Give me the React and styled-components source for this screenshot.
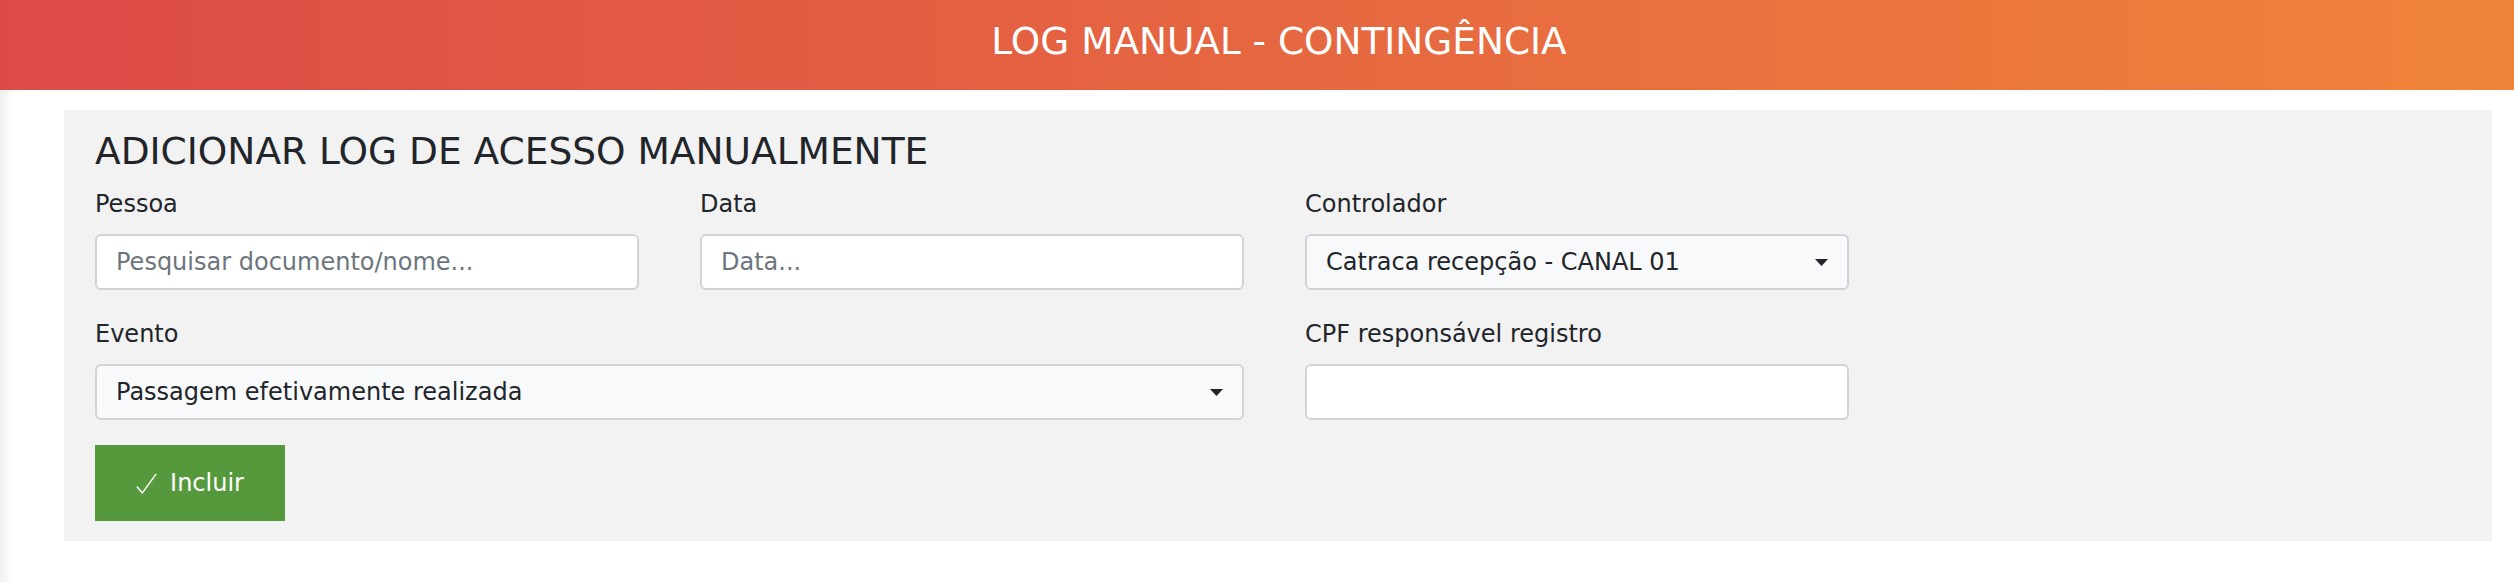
import React from "react";
import styled, { createGlobalStyle } from "styled-components";

const GlobalStyle = createGlobalStyle`
  body {
    margin: 0;
    background: #ffffff;
    font-family: "DejaVu Sans", "Open Sans", sans-serif;
    color: #212529;
  }
  * {
    box-sizing: border-box;
  }
`;

function App() {
  return (
    <>
      <GlobalStyle />
      <Header>
        <Title>LOG MANUAL - CONTINGÊNCIA</Title>
      </Header>
      <Main>
        <Panel>
          <Heading>ADICIONAR LOG DE ACESSO MANUALMENTE</Heading>
          <Form>
            <Field>
              <Label htmlFor="pessoa">Pessoa</Label>
              <Input id="pessoa" placeholder="Pesquisar documento/nome..." />
            </Field>
            <Field>
              <Label htmlFor="data">Data</Label>
              <Input id="data" placeholder="Data..." />
            </Field>
            <Field>
              <Label htmlFor="controlador">Controlador</Label>
              <Select id="controlador">
                <span>Catraca recepção - CANAL 01</span>
                <Caret />
              </Select>
            </Field>
            <Field $span={2}>
              <Label htmlFor="evento">Evento</Label>
              <Select id="evento">
                <span>Passagem efetivamente realizada</span>
                <Caret />
              </Select>
            </Field>
            <Field>
              <Label htmlFor="cpf">CPF responsável registro</Label>
              <Input id="cpf" />
            </Field>
          </Form>
          <Button type="button">
            <CheckIcon />
            Incluir
          </Button>
        </Panel>
      </Main>
    </>
  );
}

const Caret = () => (
  <svg width="13" height="7" viewBox="0 0 13 7">
    <path d="M0 0 H13 L6.5 7 Z" fill="#212529" />
  </svg>
);

const CheckIcon = () => (
  <svg width="21" height="21" viewBox="0 0 21 21">
    <polyline
      points="0.8,13.5 6.3,20 20.2,0.8"
      fill="none"
      stroke="#ffffff"
      strokeWidth="1.4"
    />
  </svg>
);

const Header = styled.header`
  height: 90px;
  display: flex;
  align-items: center;
  justify-content: center;
  padding: 0 0 8px 44px;
  background: linear-gradient(90deg, #dc4a47 0%, #ef833a 100%);
`;

const Title = styled.h1`
  margin: 0;
  color: #ffffff;
  font-size: 37.4px;
  font-weight: 400;
  line-height: 1.2;
`;

const Main = styled.main`
  min-height: calc(100vh - 90px);
  padding: 20px 22px 0 64px;
  background: linear-gradient(90deg, #efefef 0px, #ffffff 13px);
`;

const Panel = styled.section`
  padding: 20px 31px;
  background: #f2f2f2;
`;

const Heading = styled.h4`
  margin: 0 0 13px;
  font-size: 37.5px;
  font-weight: 400;
  line-height: 43px;
  color: #212529;
`;

const Form = styled.div`
  display: grid;
  grid-template-columns: repeat(4, 544px);
  column-gap: 61px;
  row-gap: 26px;
`;

const Field = styled.div`
  display: flex;
  flex-direction: column;
  grid-column: span ${(p) => p.$span || 1};
`;

const Label = styled.label`
  font-size: 24px;
  line-height: 36px;
  margin-bottom: 12px;
  color: #212529;
`;

const Input = styled.input`
  height: 56px;
  padding: 0 19px;
  border: 2px solid #d0d4d9;
  border-radius: 6px;
  background: #ffffff;
  font-family: inherit;
  font-size: 24px;
  color: #212529;
  outline: none;

  &::placeholder {
    color: #6c757d;
  }
`;

const Select = styled.div`
  height: 56px;
  display: flex;
  align-items: center;
  justify-content: space-between;
  padding: 0 19px;
  border: 2px solid #d0d4d9;
  border-radius: 6px;
  background: #f8f9fa;
  font-size: 24px;
  color: #212529;
`;

const Button = styled.button`
  margin-top: 25px;
  width: 190px;
  height: 76px;
  border: none;
  border-radius: 0;
  background: #56993d;
  color: #ffffff;
  font-family: inherit;
  font-size: 24px;
  display: flex;
  align-items: center;
  justify-content: center;
  gap: 13px;
`;

export default App;
